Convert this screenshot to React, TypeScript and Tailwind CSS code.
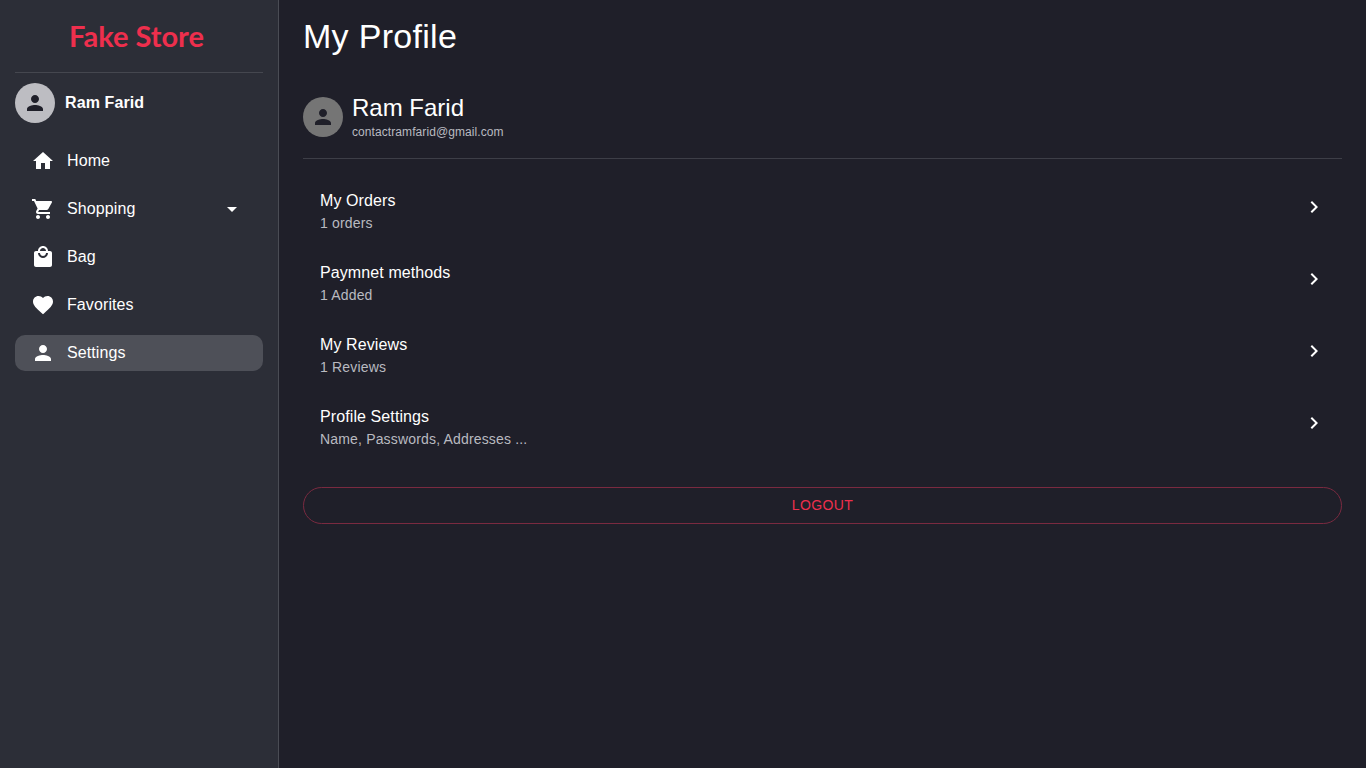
import type { ReactNode } from "react";

const icons = {
  home: "M10 20v-6h4v6h5v-8h3L12 3 2 12h3v8z",
  cart: "M7 18c-1.1 0-1.99.9-1.99 2S5.9 22 7 22s2-.9 2-2-.9-2-2-2zM1 2v2h2l3.6 7.59-1.35 2.45c-.16.28-.25.61-.25.96 0 1.1.9 2 2 2h12v-2H7.42c-.14 0-.25-.11-.25-.25l.03-.12.9-1.63h7.45c.75 0 1.41-.41 1.75-1.03l3.58-6.49c.08-.14.12-.31.12-.48 0-.55-.45-1-1-1H5.21l-.94-2H1zm16 16c-1.1 0-1.99.9-1.99 2s.89 2 1.99 2 2-.9 2-2-.9-2-2-2z",
  bag: "M19 6h-2c0-2.76-2.24-5-5-5S7 3.24 7 6H5c-1.1 0-1.99.9-1.99 2L3 20c0 1.1.9 2 2 2h14c1.1 0 2-.9 2-2V8c0-1.1-.9-2-2-2zm-7-3c1.66 0 3 1.34 3 3H9c0-1.66 1.34-3 3-3zm0 10c-2.76 0-5-2.24-5-5h2c0 1.66 1.34 3 3 3s3-1.34 3-3h2c0 2.76-2.24 5-5 5z",
  heart: "M12 21.35l-1.45-1.32C5.4 15.36 2 12.28 2 8.5 2 5.42 4.42 3 7.5 3c1.74 0 3.41.81 4.5 2.09C13.09 3.81 14.76 3 16.5 3 19.58 3 22 5.42 22 8.5c0 3.78-3.4 6.86-8.55 11.54L12 21.35z",
  person: "M12 12c2.21 0 4-1.79 4-4s-1.79-4-4-4-4 1.79-4 4 1.79 4 4 4zm0 2c-2.67 0-8 1.34-8 4v2h16v-2c0-2.66-5.33-4-8-4z",
  drop: "M7 10l5 5 5-5z",
  chevron: "M10 6L8.59 7.41 13.17 12l-4.58 4.59L10 18l6-6z",
};

function Icon({ d, className }: { d: string; className?: string }) {
  return (
    <svg viewBox="0 0 24 24" fill="currentColor" className={className}>
      <path d={d} />
    </svg>
  );
}

function NavItem({ icon, label, active, children }: { icon: string; label: string; active?: boolean; children?: ReactNode }) {
  return (
    <div className={`flex h-9 items-center rounded-[10px] pl-4 pr-[19px] ${active ? "bg-[#4e5058]" : ""}`}>
      <Icon d={icon} className="h-6 w-6 shrink-0 text-white" />
      <span className="ml-3 flex-1 text-base leading-6 tracking-[0.1px] text-white">{label}</span>
      {children}
    </div>
  );
}

function ProfileRow({ title, sub }: { title: string; sub: string }) {
  return (
    <div className="flex h-[72px] items-center pl-[17px] pr-4">
      <div className="flex-1 pt-2">
        <p className="text-base leading-6 tracking-[0.1px] text-white">{title}</p>
        <p className="text-sm leading-5 tracking-[0.17px] text-[#b9bac0]">{sub}</p>
      </div>
      <Icon d={icons.chevron} className="h-6 w-6 text-white" />
    </div>
  );
}

export default function App() {
  return (
    <div className="flex h-screen bg-[#1f1f29] font-['Liberation_Sans',Arial,sans-serif]">
      <aside className="w-[279px] shrink-0 border-r border-[#4a4c54] bg-[#2c2e37] px-[15px]">
        <div className="flex h-[73px] items-center justify-center border-b border-[#45474f] pr-[5px]">
          <span className="font-['Lato',sans-serif] text-[29px] font-bold text-[#ee2f4d]">Fake Store</span>
        </div>
        <div className="mt-[10px] flex items-center gap-[10px]">
          <div className="flex h-10 w-10 items-center justify-center rounded-full bg-[#bdbdc2]">
            <Icon d={icons.person} className="h-6 w-6 text-[#1f1f29]" />
          </div>
          <span className="text-base font-bold tracking-[0.1px] text-white">Ram Farid</span>
        </div>
        <nav className="mt-5 flex flex-col gap-3">
          <NavItem icon={icons.home} label="Home" />
          <NavItem icon={icons.cart} label="Shopping">
            <Icon d={icons.drop} className="h-6 w-6 text-white" />
          </NavItem>
          <NavItem icon={icons.bag} label="Bag" />
          <NavItem icon={icons.heart} label="Favorites" />
          <NavItem icon={icons.person} label="Settings" active />
        </nav>
      </aside>
      <main className="flex-1 px-6">
        <h1 className="mt-4 text-[34px] leading-10 tracking-[0.3px] text-white">My Profile</h1>
        <div className="mt-[41px] flex items-start gap-[9px] border-b border-[#3d3e47] pb-[17px]">
          <div className="flex h-10 w-10 items-center justify-center rounded-full bg-[#757575]">
            <Icon d={icons.person} className="h-6 w-6 text-[#1f1f29]" />
          </div>
          <div>
            <p className="text-2xl leading-[22px] text-white">Ram Farid</p>
            <p className="mt-[4px] text-xs leading-[18px] tracking-[0.08px] text-[#b9bac0]">contactramfarid@gmail.com</p>
          </div>
        </div>
        <div className="mt-3">
          <ProfileRow title="My Orders" sub="1 orders" />
          <ProfileRow title="Paymnet methods" sub="1 Added" />
          <ProfileRow title="My Reviews" sub="1 Reviews" />
          <ProfileRow title="Profile Settings" sub="Name, Passwords, Addresses ..." />
        </div>
        <button className="mt-7 flex h-[37px] w-full items-center justify-center rounded-full border border-[#7a2a40] pb-[2px] text-sm leading-6 tracking-[0.4px] text-[#ee2f4d]">
          LOGOUT
        </button>
      </main>
    </div>
  );
}
